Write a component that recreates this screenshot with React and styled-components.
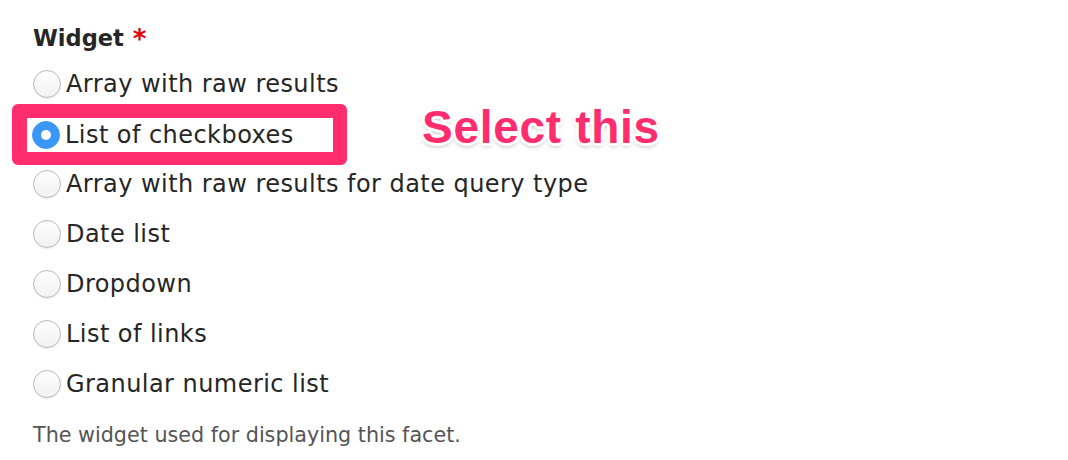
import React from "react";
import styled, { createGlobalStyle } from "styled-components";

const GlobalStyle = createGlobalStyle`
  body {
    margin: 0;
    background: #fff;
  }
`;

const Page = styled.div`
  padding: 25px 0 0 33px;
  font-family: "DejaVu Sans", "Liberation Sans", sans-serif;
  color: #262626;
`;

const FieldLabel = styled.div`
  font-size: 22.5px;
  font-weight: bold;
  line-height: normal;
  margin-bottom: 7px;
  display: flex;
  align-items: flex-start;
`;

const Required = styled.span`
  color: #e00000;
  font-size: 26px;
  margin-left: 9px;
  line-height: 1;
  margin-top: 1px;
`;

const OptionList = styled.div`
  display: flex;
  flex-direction: column;
`;

const OptionRow = styled.label`
  display: flex;
  align-items: center;
  height: 50px;
  font-size: 24px;
  letter-spacing: 0.45px;
`;

const Callout = styled.div`
  display: flex;
  align-items: center;
  box-sizing: border-box;
  width: 335px;
  height: 61px;
  margin: -5px 0 -6px -21px;
  padding-left: 5px;
  border-style: solid;
  border-color: #ff2d6d;
  border-width: 14px 14px 13px 15px;
  border-radius: 6px;
  background: #fff;
`;

const Radio = styled.span`
  flex: none;
  box-sizing: border-box;
  width: 28px;
  height: 28px;
  margin-right: 5px;
  border-radius: 50%;
  border: 1px solid ${({ checked }) => (checked ? "#3a97f7" : "#b9b9b9")};
  background: ${({ checked }) =>
    checked ? "#3a97f7" : "linear-gradient(#ffffff, #f1f1f1)"};
  box-shadow: ${({ checked }) =>
    checked ? "none" : "0 1px 1px rgba(0, 0, 0, 0.08)"};
  display: flex;
  align-items: center;
  justify-content: center;

  &::after {
    content: "";
    display: ${({ checked }) => (checked ? "block" : "none")};
    width: 10px;
    height: 10px;
    border-radius: 50%;
    background: #fff;
  }
`;

const Annotation = styled.span`
  margin-left: 75px;
  margin-bottom: 15px;
  font-family: "Liberation Sans", Arial, sans-serif;
  font-weight: bold;
  font-size: 46px;
  line-height: 1;
  letter-spacing: 0.7px;
  color: #ff2d6d;
  text-shadow:
    3px 0 0 #fff, -3px 0 0 #fff, 0 3px 0 #fff, 0 -3px 0 #fff,
    2px 2px 0 #fff, -2px 2px 0 #fff, 2px -2px 0 #fff, -2px -2px 0 #fff,
    0 3px 5px rgba(0, 0, 0, 0.35);
`;

const Description = styled.div`
  margin-top: 14px;
  font-size: 20.7px;
  color: #555;
`;

const options = [
  "Array with raw results",
  "List of checkboxes",
  "Array with raw results for date query type",
  "Date list",
  "Dropdown",
  "List of links",
  "Granular numeric list",
];

const selected = "List of checkboxes";

export default function App() {
  return (
    <Page>
      <GlobalStyle />
      <FieldLabel>
        Widget<Required>*</Required>
      </FieldLabel>
      <OptionList>
        {options.map((item) =>
          item === selected ? (
            <OptionRow key={item}>
              <Callout>
                <Radio checked />
                {item}
              </Callout>
              <Annotation>Select this</Annotation>
            </OptionRow>
          ) : (
            <OptionRow key={item}>
              <Radio />
              {item}
            </OptionRow>
          )
        )}
      </OptionList>
      <Description>The widget used for displaying this facet.</Description>
    </Page>
  );
}
